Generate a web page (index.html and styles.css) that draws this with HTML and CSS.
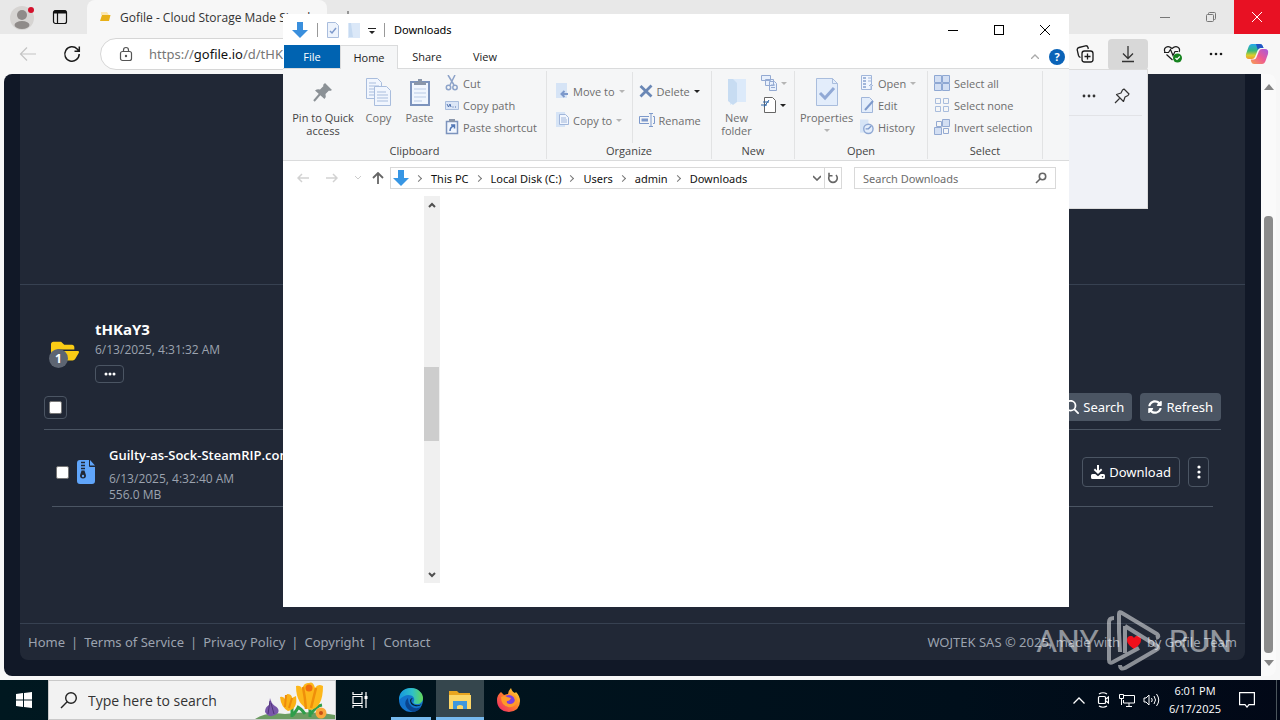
FILE: index.html
```html
<!DOCTYPE html>
<html lang="en">
<head>
<meta charset="utf-8">
<title>Desktop</title>
<link rel="stylesheet" href="styles.css">
</head>
<body>
<main class="browser">
  <header class="tabstrip">
    <button class="profile" aria-label="Profile"><svg width="32" height="32" viewBox="0 0 32 32"><circle cx="16" cy="17" r="12" fill="#d6d4d2"/><circle cx="16" cy="14" r="5" fill="#8f8b89"/><ellipse cx="16" cy="24" rx="7.500" ry="4" fill="#8f8b89"/><circle cx="25" cy="9" r="3" fill="#d4112c"/></svg></button>
    <button class="tab-actions" aria-label="Tab actions"><svg width="16" height="16" viewBox="0 0 16 16" fill="none" stroke="#111" stroke-width="1.200"><rect x="1.500" y="1.500" width="13" height="13" rx="2"/><path d="M2 3.500h12M5.500 4v10" /><path d="M2 3h12" stroke-width="3"/></svg></button>
    <div class="tab"><svg width="12" height="12" viewBox="0 0 12 12"><path d="M2 1h6l2 3H2z" fill="#fbe6b0"/><path d="M3 4h8.500l-1.500 6H1z" fill="#e8b018"/></svg><span class="tab-title">Gofile - Cloud Storage Made Simple</span></div>
    <button class="new-tab" aria-label="New tab"><svg width="12" height="12" viewBox="0 0 12 12" stroke="#444"><path d="M6 0v12M0 6h12"/></svg></button>
    <div class="window-controls">
      <button class="control" aria-label="Minimize"><svg width="10" height="10" stroke="#777"><path d="M0 5.500h10"/></svg></button>
      <button class="control" aria-label="Restore"><svg width="10" height="10" fill="none" stroke="#777"><rect x=".5" y="2.500" width="7" height="7" rx="1"/><path d="M2.500 2V1.500q0-1 1-1h5q1 0 1 1v5q0 1-1 1H8"/></svg></button>
      <button class="control control-close" aria-label="Close"><svg width="10" height="10" stroke="#fff"><path d="M0 0l10 10M10 0L0 10"/></svg></button>
    </div>
  </header>
  <nav class="toolbar">
    <button class="nav-button back" aria-label="Back"><svg width="18" height="16" viewBox="0 0 18 16" fill="none" stroke="#c4c4c4" stroke-width="1.200"><path d="M17 8H2M8 1.500L1.500 8 8 14.500"/></svg></button>
    <button class="nav-button" aria-label="Reload"><svg width="18" height="18" viewBox="0 0 18 18" fill="none" stroke="#1b1b1b" stroke-width="1.500"><path d="M16.200 9a7.200 7.200 0 1 1-2-5l2 2.200M16.300 1.500v4.800h-4.800"/></svg></button>
    <div class="address">
      <svg width="14" height="16" viewBox="0 0 14 16" fill="none" stroke="#555" stroke-width="1.200"><rect x="1.500" y="5.500" width="11" height="9" rx="2"/><path d="M4.500 5.500V4a2.500 2.500 0 0 1 5 0v1.500"/><circle cx="7" cy="10" r=".6" fill="#555"/></svg>
      <span class="url">https://<b>gofile.io</b>/d/tHKaY3</span>
    </div>
    <button class="tool" aria-label="Collections"><svg width="18" height="18" viewBox="0 0 18 18" fill="none" stroke="#1b1b1b" stroke-width="1.300"><rect x="6" y="6" width="11" height="11" rx="2.500"/><path d="M11.500 8.500v6M8.500 11.500h6M4.500 12.500Q3 12 2.500 10.500L1.200 5Q1 3 3 2.500l6.500-1.700q2-.3 2.500 1.700l.3 1.500"/></svg></button>
    <button class="tool tool-active" aria-label="Downloads"><svg width="16" height="18" viewBox="0 0 16 18" fill="none" stroke="#333" stroke-width="1.300"><path d="M8 1v12M3 8.500l5 5 5-5M2 16.500h12"/></svg></button>
    <button class="tool tool-wide" aria-label="Browser essentials"><svg width="20" height="18" viewBox="0 0 20 18" fill="none" stroke="#1b1b1b" stroke-width="1.200"><path d="M9.500 15L3.500 9.500M2 7C0 3 4.500-.5 9 3.500c4.500-4 9-.5 7 3.500M1 7.500h4.500l2-3 2.500 6 2-4h3"/><circle cx="14.500" cy="13" r="4.500" fill="#16831f" stroke="none"/><path d="M12.500 13l1.500 1.500 2.800-3" stroke="#fff"/></svg></button>
    <button class="tool tool-dots" aria-label="Settings and more"><svg width="14" height="4" fill="#1b1b1b"><circle cx="2" cy="2" r="1.300"/><circle cx="7" cy="2" r="1.300"/><circle cx="12" cy="2" r="1.300"/></svg></button>
    <button class="tool tool-copilot" aria-label="Copilot"><svg width="24" height="22" viewBox="0 0 24 22"><defs><linearGradient id="ca" x1="0" y1="0" x2="0" y2="1"><stop offset="0" stop-color="#26a9ee"/><stop offset=".45" stop-color="#37b87b"/><stop offset=".75" stop-color="#d8cf2b"/><stop offset="1" stop-color="#f39a32"/></linearGradient><linearGradient id="cb" x1="1" y1="0" x2="0" y2="1"><stop offset="0" stop-color="#a35ae0"/><stop offset=".5" stop-color="#ee5a91"/><stop offset="1" stop-color="#f7a052"/></linearGradient></defs><path d="M7 1h8q2 0 2.700 2l.8 2h-3q-2 0-2.700 2L10 14q-.8 2-3 2H4q-4 0-3-5L3.500 4Q4.500 1 7 1z" fill="url(#ca)"/><path d="M11 1h4q2 0 2.700 2l.8 2h-3q-2 0-2.700 2z" fill="#2354c4"/><path d="M17 21H9q-2 0-2.700-2l-.6-2.500h3q2 0 2.700-2L14 8q.8-2 3-2h3q4 0 3 5l-2.500 7q-1 3-3.500 3z" fill="url(#cb)"/></svg></button>
  </nav>
  <div class="viewport">
    <div class="page">
      <div class="card">
        <div class="hero"></div>
        <section class="files">
          <div class="folder">
            <div class="folder-icon"><svg width="28" height="26" viewBox="0 50 576 410" fill="#facc15" aria-hidden="true"><path d="M572.700 292.100L500.300 416.200A64 64 0 0 1 445 448H45c-18.500 0-30-20-20.700-36l72.400-124.200A64 64 0 0 1 152 256h400c18.500 0 30 20 20.700 36.100zM152 224h328v-48c0-26.500-21.500-48-48-48H272l-64-64H48C21.500 64 0 85.500 0 112v278l69-118.400C86.200 242.200 118 224 152 224z"/></svg><span class="count">1</span></div>
            <div class="folder-info">
              <h1 class="folder-name">tHKaY3</h1>
              <p class="meta">6/13/2025, 4:31:32 AM</p>
              <button class="more" aria-label="Folder details"><svg width="12" height="4" fill="#fff"><circle cx="2" cy="2" r="1.500"/><circle cx="6" cy="2" r="1.500"/><circle cx="10" cy="2" r="1.500"/></svg></button>
            </div>
          </div>
          <div class="actions">
            <label class="check-all"><input type="checkbox" aria-label="Select all files"></label>
            <div class="buttons">
              <button class="btn btn-solid"><svg width="14" height="14" viewBox="0 0 512 512" fill="#fff"><path d="M416 208c0 46-15 88-40 122.700L502.600 457.400c12.500 12.500 12.500 32.800 0 45.300s-32.800 12.500-45.300 0L330.700 376c-34.400 25.200-76.800 40-122.700 40C93 416 0 323 0 208S93 0 208 0s208 93 208 208zM208 352a144 144 0 1 0 0-288 144 144 0 1 0 0 288z"/></svg>Search</button>
              <button class="btn btn-solid"><svg width="14" height="14" viewBox="0 0 512 512" fill="#fff"><path d="M370.700 133.300C339.500 104 298.900 88 255.800 88c-77.400 0-144.300 53.200-162.700 126.800-1.400 5.400-6.200 9.200-11.700 9.200H24.100c-7.500 0-13.200-6.800-11.800-14.200C34 95 134.800 8 256 8c66.400 0 126.800 26.100 171.300 68.700L463 41c15.100-15.100 41-4.400 41 17v134c0 13.300-10.700 24-24 24H346c-21.400 0-32.100-25.900-17-41zM32 296h134c21.400 0 32.100 25.900 17 41l-41.700 41.700c31.200 29.300 71.800 45.300 114.800 45.300 77.500 0 144.400-53.100 162.800-126.800 1.400-5.400 6.200-9.200 11.700-9.200h57.300c7.500 0 13.200 6.800 11.800 14.200C478 417 377.200 504 256 504c-66.400 0-126.800-26.100-171.300-68.700L49 471c-15.100 15.100-41 4.400-41-17V320c0-13.300 10.700-24 24-24z"/></svg>Refresh</button>
            </div>
          </div>
          <div class="file">
            <input type="checkbox" aria-label="Select file">
            <svg class="zip" width="20" height="24" viewBox="0 0 20 24"><path d="M4 0h9v6q0 1 1 1h5v14q0 3-3 3H4q-3 0-3-3V3q0-3 3-3zM14 0l5 5.500h-5z" fill="#60a5fa"/><path d="M5 2.500h4M5 5.500h4M5 8.500h4" stroke="#212836" stroke-width="1.500"/><path d="M5.500 10.500h3l1.500 5a3 3 0 0 1-6 0z" fill="#212836"/><circle cx="7" cy="16" r="1.200" fill="#60a5fa"/></svg>
            <div class="file-info">
              <a class="file-name" href="#">Guilty-as-Sock-SteamRIP.com.rar</a>
              <p class="meta">6/13/2025, 4:32:40 AM</p>
              <p class="meta">556.0 MB</p>
            </div>
            <button class="btn btn-line"><svg width="14" height="14" viewBox="0 0 14 14" fill="#fff"><path d="M6 0h2v5.500l2-2 1.300 1.400L7 9 2.700 4.900 4 3.500l2 2z"/><path d="M1.500 9h2.800L7 11.300 9.700 9h2.800Q14 9 14 10.500v2q0 1.500-1.500 1.500h-11Q0 14 0 12.500v-2Q0 9 1.500 9z"/><circle cx="11.500" cy="11.700" r=".8" fill="#212836"/></svg>Download</button>
            <button class="btn btn-line kebab" aria-label="File menu"><svg width="4" height="14" fill="#fff"><circle cx="2" cy="2" r="1.600"/><circle cx="2" cy="7" r="1.600"/><circle cx="2" cy="12" r="1.600"/></svg></button>
          </div>
        </section>
        <footer class="footer">
          <nav class="links"><a href="#">Home</a><i>|</i><a href="#">Terms of Service</a><i>|</i><a href="#">Privacy Policy</a><i>|</i><a href="#">Copyright</a><i>|</i><a href="#">Contact</a></nav>
          <p class="credit">WOJTEK SAS © 2025, made with <svg width="14" height="13" viewBox="0 0 14 13"><path d="M7 13C2 9.500 0 7 0 4a3.700 3.700 0 0 1 7-2 3.700 3.700 0 0 1 7 2c0 3-2 5.500-7 9z" fill="#f0101c"/></svg> by Gofile Team</p>
        </footer>
      </div>
    </div>
    <div class="scrollbar" aria-hidden="true"><svg width="10" height="6" fill="#858585"><path d="M5 0l5 6H0z"/></svg><span class="thumb"></span><svg width="10" height="6" fill="#858585"><path d="M0 0h10L5 6z"/></svg></div>
  </div>
</main>

<aside class="downloads">
  <header class="downloads-head"><button class="tool-mini" aria-label="More options"><svg width="14" height="4" fill="#333"><circle cx="2" cy="2" r="1.400"/><circle cx="7" cy="2" r="1.400"/><circle cx="12" cy="2" r="1.400"/></svg></button><button class="tool-mini" aria-label="Pin"><svg width="16" height="16" viewBox="0 0 16 16" fill="none" stroke="#333" stroke-width="1.200" stroke-linejoin="round"><path d="M10 1l5 5-1 1.500-3 1.500-1.500 4.500L2.500 6.500 7 5l1.500-3zM5.500 10.500L1 15"/></svg></button></header>
</aside>

<div class="watermark" aria-hidden="true"><span>ANY</span><svg width="54" height="62" viewBox="0 0 54 62" fill="none" stroke="#fff" stroke-width="4" stroke-linejoin="round"><path d="M7 8Q2 8 2 12v38q0 4 4 2l26-14M12 22V4q0-3 3-1l35 21q3 3-1 4"/><path d="M12 22l1 20M18 16l32 20q3 2-1 4L18 58q-5 2-5-3M18 16v27"/></svg><span>RUN</span></div>

<section class="explorer" aria-label="Downloads folder">
  <header class="ex-title">
    <svg width="16" height="16" viewBox="0 0 16 16"><path d="M5 0h6v8h5l-8 8-8-8h5z" fill="#3a8fdd"/></svg><span class="bar"></span>
    <svg width="12" height="16" viewBox="0 0 12 16" fill="#edf3fc" stroke="#a9bddd"><path d="M.5.5h8l3 3v12H.5z"/><path d="M3 9l2 2 4-5" fill="none" stroke="#7d99cb" stroke-width="1.500"/></svg>
    <svg width="12" height="16" viewBox="0 0 12 16"><path d="M0 1h12v15H0z" fill="#dbe8f8"/><path d="M1 1h2l2 14H1z" fill="#c6daf1"/></svg>
    <svg width="8" height="7" fill="#222"><path d="M0 0h8v1H0zM1 3h6L4 6z"/></svg><span class="bar"></span>
    <h2 class="ex-name">Downloads</h2>
    <div class="window-controls">
      <button class="control" aria-label="Minimize window"><svg width="10" height="10" stroke="#000"><path d="M0 5.500h10"/></svg></button>
      <button class="control" aria-label="Maximize window"><svg width="10" height="10" fill="none" stroke="#000"><rect x=".5" y=".5" width="9" height="9"/></svg></button>
      <button class="control" aria-label="Close window"><svg width="10" height="10" stroke="#000"><path d="M0 0l10 10M10 0L0 10"/></svg></button>
    </div>
  </header>
  <nav class="ex-tabs">
    <button class="ex-tab ex-file">File</button><button class="ex-tab ex-current">Home</button><button class="ex-tab">Share</button><button class="ex-tab">View</button>
    <div class="ex-help"><svg width="8" height="5" fill="none" stroke="#aaa" stroke-width="1.300"><path d="M0 5l4-4 4 4"/></svg><button class="help">?</button></div>
  </nav>
  <div class="ribbon">
    <div class="group clipboard">
      <div class="group-body">
        <button class="big enabled"><svg width="24" height="24" viewBox="0 0 24 24"><path d="M14 3l7 7-2 1-1-.5-3.500 3.500q1 3-1 5L4 10.500q2.500-2 5-1L12.500 6 12 5z" fill="#8b9196"/><path d="M9 14l-6 7" stroke="#8b9196" stroke-width="2"/></svg><span>Pin to Quick access</span></button>
        <button class="big"><svg width="26" height="28" viewBox="0 0 26 28" fill="#f1f6fe" stroke="#a9bddd"><path d="M.5.5h11l4 4v16H.5z"/><path d="M3 5h7M3 8h10M3 11h5M3 14h5M3 17h5"/><path d="M8.500 8.500h12l4 4v15h-16z"/><path d="M11 14h9M11 17h11M11 20h11M11 23h11"/></svg><span>Copy</span></button>
        <button class="big"><svg width="22" height="28" viewBox="0 0 22 28"><path d="M2 4h18v23H2z" fill="#f1f6fe" stroke="#7c93bd" stroke-width="2"/><path d="M5 4h12v3H5zM9 1h4v3H9z" fill="#8a96aa"/><path d="M5 11h12M5 15h12M5 19h12M5 23h8" stroke="#bacbe6"/></svg><span>Paste</span></button>
        <div class="stack">
          <button class="small"><svg width="14" height="16" viewBox="0 0 14 16" fill="none" stroke="#8da3c9" stroke-width="1.500"><path d="M3 0l6 10M10 0L5 10"/><circle cx="3.500" cy="12.500" r="2.200"/><circle cx="10" cy="12.500" r="2.200"/></svg>Cut</button>
          <button class="small"><svg width="14" height="9" viewBox="0 0 14 9"><path d="M.5.5h13v8H.5z" fill="#dbe6f7" stroke="#a9bddd"/><path d="M2 3l1.500 3L5 3l1 3M7.500 6h1M10 6h1" stroke="#4e70ad" fill="none"/></svg>Copy path</button>
          <button class="small"><svg width="14" height="16" viewBox="0 0 14 16"><path d="M1.500 2.500h11v12h-11z" fill="#f1f6fe" stroke="#7c93bd" stroke-width="1.500"/><path d="M4 0h6v3H4z" fill="#8a96aa"/><path d="M5 12q0-4 4-5M6 6h3.500v3.500" fill="none" stroke="#5277b5" stroke-width="1.500"/></svg>Paste shortcut</button>
        </div>
      </div>
      <h3>Clipboard</h3>
    </div>
    <div class="group organize">
      <div class="group-body">
        <div class="stack tall">
          <button class="small"><svg width="14" height="16" viewBox="0 0 14 16"><path d="M1 0h11v15H1z" fill="#d6e4f6"/><path d="M13 11H7M9.500 8L6.500 11l3 3" fill="none" stroke="#7d99cb" stroke-width="2"/></svg>Move to<s></s></button>
          <button class="small"><svg width="14" height="16" viewBox="0 0 14 16"><path d="M1 0h9v15H1z" fill="#d6e4f6"/><path d="M4.500 2.500h6l3 3v7h-9zM6 6h5M6 8h6M6 10h6" fill="#f1f6fe" stroke="#a1b6da"/></svg>Copy to<s></s></button>
        </div>
        <div class="stack tall lined">
          <button class="small"><svg width="14" height="14" viewBox="0 0 14 14" stroke="#6a87b5" stroke-width="2.800"><path d="M1.500 2l11 10.500M12.500 1.500l-11 11"/></svg>Delete<s class="dark"></s></button>
          <button class="small"><svg width="16" height="14" viewBox="0 0 16 14" fill="none" stroke="#7d99cb"><path d="M10 3.500H.5v7H10M14 3.500h1.500v7H14M10 .5h4M12 1v12M10 13.500h4"/><path d="M2.500 7H9" stroke-width="3"/></svg>Rename</button>
        </div>
      </div>
      <h3>Organize</h3>
    </div>
    <div class="group create">
      <div class="group-body">
        <button class="big"><svg width="20" height="28" viewBox="0 0 20 28"><path d="M3 1h16v23H8l-5 3z" fill="#dceafa"/><path d="M1 1h5l4 4v19l-4 3-5-4z" fill="#c7dcf2"/></svg><span>New folder</span></button>
        <div class="stack icons">
          <button class="small" aria-label="New item"><svg width="16" height="16" viewBox="0 0 16 16" fill="#e8f0fc" stroke="#94aad2"><path d="M.5.5h9v5h-9zM4.500 4.500h8v6h-8zM8.500 6.500h5l2 2v7h-7zM10 10h4M10 12.500h4"/></svg><s></s></button>
          <button class="small" aria-label="Easy access"><svg width="15" height="16" viewBox="0 0 15 16" fill="#fff" stroke="#666"><path d="M3.500.5h8l3 3v12h-11z"/><path d="M0 8h6M2 5h6M3 10l5-7" stroke="#2f67a8" fill="none"/></svg><s class="dark"></s></button>
        </div>
      </div>
      <h3>New</h3>
    </div>
    <div class="group open">
      <div class="group-body">
        <button class="big"><svg width="22" height="28" viewBox="0 0 22 28"><path d="M.5.5h16l5 5v22H.5z" fill="#e3edfb" stroke="#a9bddd"/><path d="M4 15l5 5 9-10" fill="none" stroke="#91a9d5" stroke-width="3"/><path d="M16.500.5v5h5" fill="none" stroke="#a9bddd"/></svg><span>Properties</span><s></s></button>
        <div class="stack">
          <button class="small"><svg width="14" height="16" viewBox="0 0 14 16" fill="#f1f6fe" stroke="#a1b6da"><path d="M1.500.5h10v14h-10z"/><path d="M3 3h3M3 6h3M3 9h3M3 12h3" stroke-width="2"/><path d="M8 3h3M8 6h3M11 15V9M9 11l2-2 2 2"/></svg>Open<s></s></button>
          <button class="small"><svg width="14" height="16" viewBox="0 0 14 16" fill="#e3edfb" stroke="#a1b6da"><path d="M1.500.5h8l3 3v12h-11z"/><path d="M5 13l8-9" stroke="#7d99cb" stroke-width="2"/></svg>Edit</button>
          <button class="small"><svg width="14" height="16" viewBox="1 0 15 16"><path d="M1 0h9v14H1z" fill="#d6e4f6"/><circle cx="10" cy="10" r="5" fill="#e3edfb" stroke="#8fa8d3" stroke-width="1.500"/><path d="M7 10h3l3-3" fill="none" stroke="#7d99cb" stroke-width="1.500"/></svg>History</button>
        </div>
      </div>
      <h3>Open</h3>
    </div>
    <div class="group select">
      <div class="group-body">
        <div class="stack">
          <button class="small"><svg width="16" height="16" viewBox="0 0 16 16" fill="#d3dff3" stroke="#8fa8d3"><path d="M.5.5h7v7h-7zM8.500.5h7v7h-7zM.5 8.500h7v7h-7zM8.500 8.500h7v7h-7z"/></svg>Select all</button>
          <button class="small"><svg width="16" height="16" viewBox="0 0 16 16" fill="none" stroke="#a9bddd"><path d="M1.500 1.500h5v5h-5zM9.500 1.500h5v5h-5zM1.500 9.500h5v5h-5zM9.500 9.500h5v5h-5z"/></svg>Select none</button>
          <button class="small"><svg width="16" height="16" viewBox="0 0 16 16" fill="none" stroke="#94aad2"><path d="M2.500 2.500h5v5h-5zM9.500 9.500h5v5h-5z"/><path d="M8.500.5h7v7h-7zM.5 8.500h7v7h-7z" fill="#d3dff3"/></svg>Invert selection</button>
        </div>
      </div>
      <h3>Select</h3>
    </div>
  </div>
  <div class="pathbar">
    <div class="path-nav">
      <button aria-label="Go back"><svg width="12" height="10" fill="none" stroke="#d2d2d2" stroke-width="1.500"><path d="M12 5H1M5 1L1 5l4 4"/></svg></button>
      <button aria-label="Go forward"><svg width="12" height="10" fill="none" stroke="#d2d2d2" stroke-width="1.500"><path d="M0 5h11M7 1l4 4-4 4"/></svg></button>
      <button aria-label="Recent locations"><svg width="6" height="4" fill="none" stroke="#ccc"><path d="M0 0l3 3 3-3"/></svg></button>
      <button aria-label="Go up"><svg width="12" height="12" fill="none" stroke="#666" stroke-width="1.800"><path d="M6 12V1M1 6l5-5 5 5"/></svg></button>
    </div>
    <div class="crumbs">
      <svg width="16" height="16" viewBox="0 0 16 16"><path d="M5 0h6v8h5l-8 8-8-8h5z" fill="#3796e4"/></svg>
      <em></em><a href="#">This PC</a><em></em><a href="#">Local Disk (C:)</a><em></em><a href="#">Users</a><em></em><a href="#">admin</a><em></em><a href="#">Downloads</a>
      <button class="crumb-drop" aria-label="Previous locations"><svg width="8" height="6" fill="none" stroke="#666" stroke-width="1.600"><path d="M0 1l4 4 4-4"/></svg></button>
      <button class="crumb-refresh" aria-label="Refresh folder"><svg width="12" height="12" viewBox="0 0 12 12" fill="none" stroke="#666" stroke-width="1.600"><path d="M3 3a4.300 4.300 0 1 0 6 0M2 .8v3h3.500"/></svg></button>
    </div>
    <div class="ex-search"><input type="text" placeholder="Search Downloads" aria-label="Search Downloads"><svg width="12" height="12" viewBox="0 0 12 12" fill="none" stroke="#666" stroke-width="1.600"><circle cx="7.500" cy="4.500" r="3.200"/><path d="M5 7L1 11"/></svg></div>
  </div>
  <div class="ex-body">
    <div class="ex-scroll" aria-hidden="true"><svg width="8" height="6" fill="none" stroke="#505050" stroke-width="2"><path d="M1 5l3-3 3 3"/></svg><span class="ex-thumb"></span><svg width="8" height="6" fill="none" stroke="#505050" stroke-width="2"><path d="M1 1l3 3 3-3"/></svg></div>
  </div>
</section>

<footer class="taskbar">
  <button class="task start" aria-label="Start"><svg width="16" height="16" fill="#fff"><path d="M0 2l7-1v6.500H0zM8 1l8-1v7.500H8zM0 8.500h7V15l-7-1zM8 8.500h8V16l-8-1z"/></svg></button>
  <div class="task-search">
    <svg width="18" height="18" viewBox="0 0 18 18" fill="none" stroke="#222" stroke-width="1.400"><circle cx="11" cy="7" r="5.300"/><path d="M7.200 10.800L1 17"/></svg>
    <input type="text" placeholder="Type here to search" aria-label="Type here to search">
    <svg class="flowers" width="80" height="38" viewBox="0 0 80 38"><path d="M0 38Q12 30 30 33q28-4 50 1v4z" fill="#6c9c62"/><path d="M37 36V24M55 36V18M56 33q5-8 11-9M50 33q-4-6-8-7M38 34q4-5 6-9" stroke="#2f9e4a" stroke-width="3" fill="none"/><path d="M25 16q3-1 5 2l2-5q5 0 5 4l4-2q2 13-8 15-7-4-8-14z" fill="#fbb116"/><path d="M31 14l-1 12M37 17l-3 10" stroke="#ee8b0c" stroke-width="2"/><path d="M41 5q5-1 6 3 2-7 7-6 4-2 6 5 3-5 8-2 0 22-13 24Q41 24 41 5z" fill="#fdb71a"/><path d="M48 6q2 10 3 22M61 7l-5 20" stroke="#ef8f0a" stroke-width="2.500" fill="none"/><circle cx="54" cy="7" r="3.500" fill="#f06e10"/><path d="M15 17q1 5 5 8 5 3 3 7-8 7-13-1 0-5 4-7z" fill="#7957a9"/><path d="M15 20l-2 13M16 22l3 11" stroke="#51347c"/><circle cx="66" cy="32" r="5.500" fill="#fba83a"/><circle cx="66" cy="32" r="2" fill="#c85016"/></svg>
  </div>
  <button class="task" aria-label="Task view"><svg width="16" height="16" fill="none" stroke="#fff" stroke-width="1.200"><path d="M1 0v2.500h9V0M1 16v-2.500h9V16M1 4.500h9v7H1zM14 0v16"/><path d="M12.500 5.500h3" stroke-width="3"/></svg></button>
  <button class="task app running" aria-label="Microsoft Edge"><svg width="24" height="24" viewBox="0 0 24 24"><defs><linearGradient id="ea" x1="0" y1="0" x2="1" y2="0"><stop offset="0" stop-color="#1596df"/><stop offset=".55" stop-color="#2ec0c9"/><stop offset="1" stop-color="#63d857"/></linearGradient></defs><circle cx="12" cy="12" r="12" fill="#1374cd"/><path d="M0 12C0 4 5 0 12 0s12 5 12 10c0 4-3 6-6 6-4 0-4-1-3-3 2-5-7-10-15-1z" fill="url(#ea)"/><path d="M9 10c-6 5-1 13 6 14 4-1 6-3 7-5-6 3-13 0-13-9z" fill="#0a458f"/><path d="M14 10q-3 2-1 5 4 4 10 1-3 3-7 2-5-1-5-6 1-2 3-2z" fill="#06202b"/></svg></button>
  <button class="task selected running" aria-label="File Explorer"><svg width="22" height="20" viewBox="0 0 22 20"><path d="M0 1h8l2 2h11v4H0z" fill="#e9a51f"/><path d="M0 5h22v14H0z" fill="#fcd667"/><path d="M4 11h14v8h-4v-3q-3-2-6 0v3H4z" fill="#3f97dd"/></svg></button>
  <button class="task firefox" aria-label="Firefox"><svg width="23" height="24" viewBox="0 0 23 24"><defs><linearGradient id="fa" x1="1" y1="0" x2="0" y2="1"><stop offset="0" stop-color="#ffe634"/><stop offset=".5" stop-color="#ff7a2d"/><stop offset="1" stop-color="#ec1c72"/></linearGradient></defs><path d="M4 4l3 3q3-1 4-1 0-3 3-6 1 4 4 5l1-1q4 4 4 9 0 10-11 11Q0 23 0 12q0-5 4-8z" fill="url(#fa)"/><circle cx="12" cy="13" r="6" fill="#7b3fe0"/><path d="M4 9q4-2 6 0l4 1q-1 3-4 3-1 3 3 3 4 0 5-4-1-4-3-6 6 3 5 8-2 6-9 5-7-2-7-10z" fill="#ff9a28"/></svg></button>
  <div class="tray">
    <button aria-label="Hidden icons"><svg width="12" height="7" fill="none" stroke="#fff" stroke-width="1.300"><path d="M.5 6.500L6 1l5.500 5.500"/></svg></button>
    <button aria-label="Camera"><svg width="12" height="16" fill="none" stroke="#fff" stroke-width="1.200"><rect x="1.500" y="4.500" width="7" height="7" rx="1"/><path d="M9 7l2.500-2v6L9 9M2 2q4-2.500 8 0M2 14q4 2.500 8 0"/></svg></button>
    <button aria-label="Network"><svg width="16" height="14" fill="none" stroke="#fff"><path d="M5 2.500h10.500v7.500H4.500V7M7 13.500h6M10 10v3.500M.5 1.500h4v4h-4zM2.500 6v6"/></svg></button>
    <button aria-label="Volume"><svg width="17" height="14" viewBox="0 0 17 14" fill="none" stroke="#fff"><path d="M1 5v4h2l3 3V2L3 5zM8.500 5q1.500 2 0 4M11 3q3 4 0 8M13.500 1q4.500 6 0 12"/></svg></button>
    <time class="clock">6:01 PM<br>6/17/2025</time>
    <button class="notify" aria-label="Notifications"><svg width="16" height="16" fill="none" stroke="#fff" stroke-width="1.200"><path d="M.6.600h14.800v12H10l-2 2.500-2-2.500H.6z"/></svg></button>
  </div>
</footer>
</body>
</html>
```

FILE: styles.css
```css
* { box-sizing: border-box; }

body {
  margin: 0;
  height: 100vh;
  display: flex;
  flex-direction: column;
  overflow: hidden;
  position: relative;
  font-family: "Open Sans", "Noto Sans", sans-serif;
  background: #f7f7f7;
}

h1, h2, h3, p { margin: 0; font-weight: 400; }
button {
  font: inherit;
  color: inherit;
  border: 0;
  background: none;
  padding: 0;
  display: flex;
  align-items: center;
  justify-content: center;
}
a { color: inherit; text-decoration: none; }
input { font: inherit; margin: 0; }
svg { flex: none; }

/* Browser chrome */
.browser { flex: 1; min-height: 0; display: flex; flex-direction: column; }
.tabstrip { height: 34px; flex: none; display: flex; background: #e8e8e8; }
.profile { width: 44px; }
.tab-actions { width: 32px; }
.tab {
  width: 240px;
  margin-left: 11px;
  padding: 0 0 0 12px;
  display: flex;
  align-items: center;
  gap: 9px;
  background: #f7f7f7;
  border-radius: 8px 8px 0 0;
  font-size: 12px;
  color: #333;
}
.tab-title { white-space: nowrap; }
.new-tab { width: 42px; }
.window-controls { margin-left: auto; display: flex; }
.control { width: 46px; }
.control-close { background: #e81123; }

.toolbar { height: 40px; flex: none; display: flex; align-items: center; }
.nav-button { width: 32px; height: 30px; }
.back { width: 56px; }
.address {
  flex: 1;
  height: 32px;
  margin-left: 12px;
  padding: 0 18px;
  display: flex;
  align-items: center;
  gap: 16px;
  border: 1px solid #d6d6d6;
  border-radius: 16px;
  background: #fff;
  font-family: "Noto Sans", sans-serif;
  font-size: 13px;
  color: #767676;
}
.url b { font-weight: 400; color: #111; }
.tool { width: 46px; height: 31px; }
.tool-active { width: 40px; background: #d8d8d8; border-radius: 4px; }
.tool-wide { width: 50px; }
.tool-dots { width: 36px; }
.tool-copilot { width: 46px; }

.viewport { flex: 1; min-height: 0; display: flex; margin: 0 4px 4px; }
.page {
  flex: 1;
  display: flex;
  padding: 0 16px 16px;
  background: #111827;
  border-radius: 8px 0 0 8px;
}
.card {
  flex: 1;
  display: flex;
  flex-direction: column;
  background: #212836;
  border-radius: 0 0 8px 8px;
  color: #fff;
}
.scrollbar {
  width: 15px;
  padding: 10px 0;
  display: flex;
  flex-direction: column;
  align-items: center;
  background: #fafafa;
  border-radius: 0 8px 8px 0;
}
.thumb { width: 9px; flex: 1; margin: 126px 0 7px; background: #8b8b8b; border-radius: 4px; }

/* File listing */
.hero { height: 211px; flex: none; border-bottom: 1px solid #374151; }
.files { padding: 32px 24px 0; }
.folder { display: flex; gap: 15px; padding-left: 7px; }
.folder-icon { position: relative; width: 29px; padding-top: 21px; }
.count {
  position: absolute;
  left: -2px;
  top: 32px;
  width: 19px;
  height: 19px;
  border-radius: 50%;
  background: #5d6572;
  font-size: 12px;
  line-height: 19px;
  font-weight: 700;
  text-align: center;
}
.folder-name { font-size: 15px; line-height: 25px; font-weight: 700; }
.meta { font-size: 12px; line-height: 16px; color: #9ca3af; }
.more {
  width: 29px;
  height: 18px;
  margin-top: 7px;
  border: 1px solid #4b5563;
  border-radius: 4px;
}
.actions {
  display: flex;
  align-items: center;
  justify-content: space-between;
  padding: 10px 0 8px;
  border-bottom: 1px solid #4b5563;
}
.check-all {
  width: 23px;
  height: 23px;
  display: flex;
  align-items: center;
  justify-content: center;
  border: 1px solid #4b5563;
  border-radius: 4px;
}
input[type="checkbox"] {
  appearance: none;
  width: 13px;
  height: 13px;
  background: #fff;
  border: 1px solid #767676;
  border-radius: 2px;
}
.buttons { display: flex; gap: 8px; }
.btn { height: 28px; padding: 0 8px; gap: 4px; border-radius: 4px; font-family: "Noto Sans", sans-serif; font-size: 13px; }
.btn-solid { background: #4b5563; }
.btn-line { height: 30px; border: 1px solid #4b5563; }
.kebab { width: 21px; padding: 0; margin: 0 4px 0 8px; }
.file {
  display: flex;
  align-items: center;
  margin: 0 8px;
  height: 77px;
  padding: 8px 0 0 4px;
  border-bottom: 1px solid #4b5563;
}
.zip { margin: 0 13px 0 7px; }
.file-info { flex: 1; padding-top: 2px; }
.file-name { display: block; font-size: 13px; line-height: 24px; font-weight: 600; padding-bottom: 4px; }
.footer {
  margin-top: auto;
  height: 37px;
  padding: 0 8px;
  display: flex;
  align-items: center;
  justify-content: space-between;
  border-top: 1px solid #374151;
  font-family: "Noto Sans", sans-serif;
  font-size: 13px;
  color: #9ca3af;
}
.links { display: flex; gap: 6px; }
.links i { font-style: normal; }
.credit svg { vertical-align: -2px; margin: 0 3px; }

/* Downloads flyout */
.downloads {
  position: absolute;
  right: 132px;
  top: 69px;
  width: 360px;
  height: 140px;
  background: #f0f2f7;
  border: 1px solid #dcdcdc;
}
.downloads-head {
  height: 46px;
  margin-right: 5px;
  display: flex;
  align-items: center;
  justify-content: flex-end;
  padding: 6px 4px 0 0;
  border-bottom: 1px solid #e2e3e7;
}
.tool-mini { width: 33px; height: 32px; }

/* Watermark */
.watermark {
  position: absolute;
  right: 48px;
  top: 609px;
  height: 64px;
  display: flex;
  align-items: center;
  gap: 8px;
  color: #fff;
  opacity: 0.5;
  font-family: Roboto, sans-serif;
  font-size: 32px;
}

/* Explorer window */
.explorer {
  position: absolute;
  left: 283px;
  top: 14px;
  width: 786px;
  height: 593px;
  display: flex;
  flex-direction: column;
  background: #fff;
  font-size: 11px;
  color: #222;
  white-space: nowrap;
}
.ex-title { height: 31px; display: flex; align-items: center; gap: 9px; padding: 0 1px 0 9px; }
.ex-title .window-controls { align-self: stretch; }
.ex-name { font-family: "Noto Sans", sans-serif; font-size: 11px; color: #000; }
.bar { width: 1px; height: 14px; background: #999; }
.ex-title > svg:nth-of-type(3) { margin-right: -1px; }
.ex-title > svg:nth-of-type(4) { margin-top: 4px; margin-right: -1px; }
.ex-tabs { height: 24px; display: flex; border-bottom: 1px solid #dadbdc; padding-left: 1px; }
.ex-tab { width: 58px; height: 24px; padding-bottom: 1px; }
.ex-file { width: 56px; height: 23px; background: #0063b1; color: #fff; }
.ex-current { background: #f5f6f7; border: 1px solid #dadbdc; border-bottom: 0; }
.ex-help { margin-left: auto; padding-right: 4px; display: flex; align-items: center; gap: 10px; }
.help { width: 16px; height: 16px; border-radius: 50%; background: #0a63b8; color: #fff; font-weight: 700; }

.ribbon {
  height: 92px;
  display: flex;
  padding: 2px 0 1px;
  background: #f5f6f7;
  border-bottom: 1px solid #dadbdc;
  color: #6d6d6d;
}
.group { display: flex; flex-direction: column; border-right: 1px solid #e2e3e4; }
.group h3 { font-size: 11px; line-height: 16px; color: #444; text-align: center; }
.group-body { flex: 1; display: flex; padding-top: 1px; }
.clipboard { width: 264px; }
.clipboard .group-body { padding-left: 5px; }
.organize { width: 165px; }
.create { width: 83px; }
.open { width: 133px; }
.select { width: 115px; }
.big {
  flex-direction: column;
  justify-content: flex-start;
  align-items: center;
  padding-top: 6px;
  gap: 5px;
  line-height: 13px;
  width: 41px;
}
.big svg { height: 28px; }
.big span { white-space: normal; }
.enabled { width: 70px; color: #444; }
.stack { display: flex; flex-direction: column; }
.small { height: 22px; gap: 4px; justify-content: flex-start; }
.tall { padding: 8px 0 0 8px; gap: 7px; }
.lined { border-left: 1px solid #e2e3e4; padding-left: 6px; margin-left: 7px; }
.clipboard .stack { padding-left: 5px; }
.create .big { width: 49px; }
.open .big { width: 63px; }
.open .stack { padding-left: 2px; }
.select .stack { padding-left: 6px; }
s {
  width: 0;
  height: 0;
  border: 3px solid transparent;
  border-top-color: #b5b5b5;
  border-bottom: 0;
}
.dark { border-top-color: #222; }

.pathbar { height: 35px; display: flex; align-items: center; padding: 0 13px 1px 14px; color: #111; }
.path-nav { display: flex; align-items: center; gap: 17px; width: 93px; }
.path-nav button:last-child { margin-left: -6px; }
.crumbs { flex: 1; height: 22px; display: flex; align-items: center; border: 1px solid #d9d9d9; padding-left: 2px; font-family: "Noto Sans", sans-serif; }
em {
  width: 5px;
  height: 5px;
  margin: 0 10px 0 7px;
  border: solid #777;
  border-width: 1px 1px 0 0;
  transform: rotate(45deg);
}
.crumb-drop { margin-left: auto; width: 15px; height: 20px; }
.crumb-refresh { width: 17px; height: 20px; border-left: 1px solid #d9d9d9; }
.ex-search {
  width: 202px;
  height: 22px;
  margin-left: 12px;
  padding: 0 8px;
  display: flex;
  align-items: center;
  border: 1px solid #d9d9d9;
  font-family: "Noto Sans", sans-serif;
}
.ex-search input, .task-search input { flex: 1; min-width: 0; border: 0; padding: 0; background: none; outline: 0; }
.ex-search input::placeholder { color: #6d6d6d; }
.ex-body { flex: 1; padding: 0 0 24px 141px; display: flex; }
.ex-scroll {
  width: 16px;
  padding: 6px 1px 5px 0;
  display: flex;
  flex-direction: column;
  align-items: center;
  justify-content: space-between;
  background: #f0f0f0;
}
.ex-thumb { width: 15px; height: 74px; margin-top: 28px; background: #cdcdcd; }

/* Taskbar */
.taskbar { height: 40px; flex: none; display: flex; background: linear-gradient(90deg, #001820, #000f1b 75%, #020817); color: #fff; }
.task { width: 48px; border-bottom: 3px solid transparent; border-top: 3px solid transparent; }
.task-search {
  width: 288px;
  padding: 0 0 0 11px;
  display: flex;
  align-items: center;
  gap: 10px;
  background: #f2f2f2;
  border: 1px solid #c9c9c9;
  font-size: 14px;
}
.task-search input::placeholder { color: #333; }
.app { width: 40px; margin: 0 5px 0 7px; }
.selected { background: #35464d; }
.running { border-bottom-color: #76b9ed; }
.tray { margin-left: auto; display: flex; align-items: center; padding-right: 3px; }
.tray button { width: 24px; height: 40px; }
.clock { width: 64px; font-size: 11px; line-height: 18px; text-align: center; }
.tray .notify { width: 50px; border-right: 1px solid #4b555c; }
.notify svg { margin-right: 9px; }
```
